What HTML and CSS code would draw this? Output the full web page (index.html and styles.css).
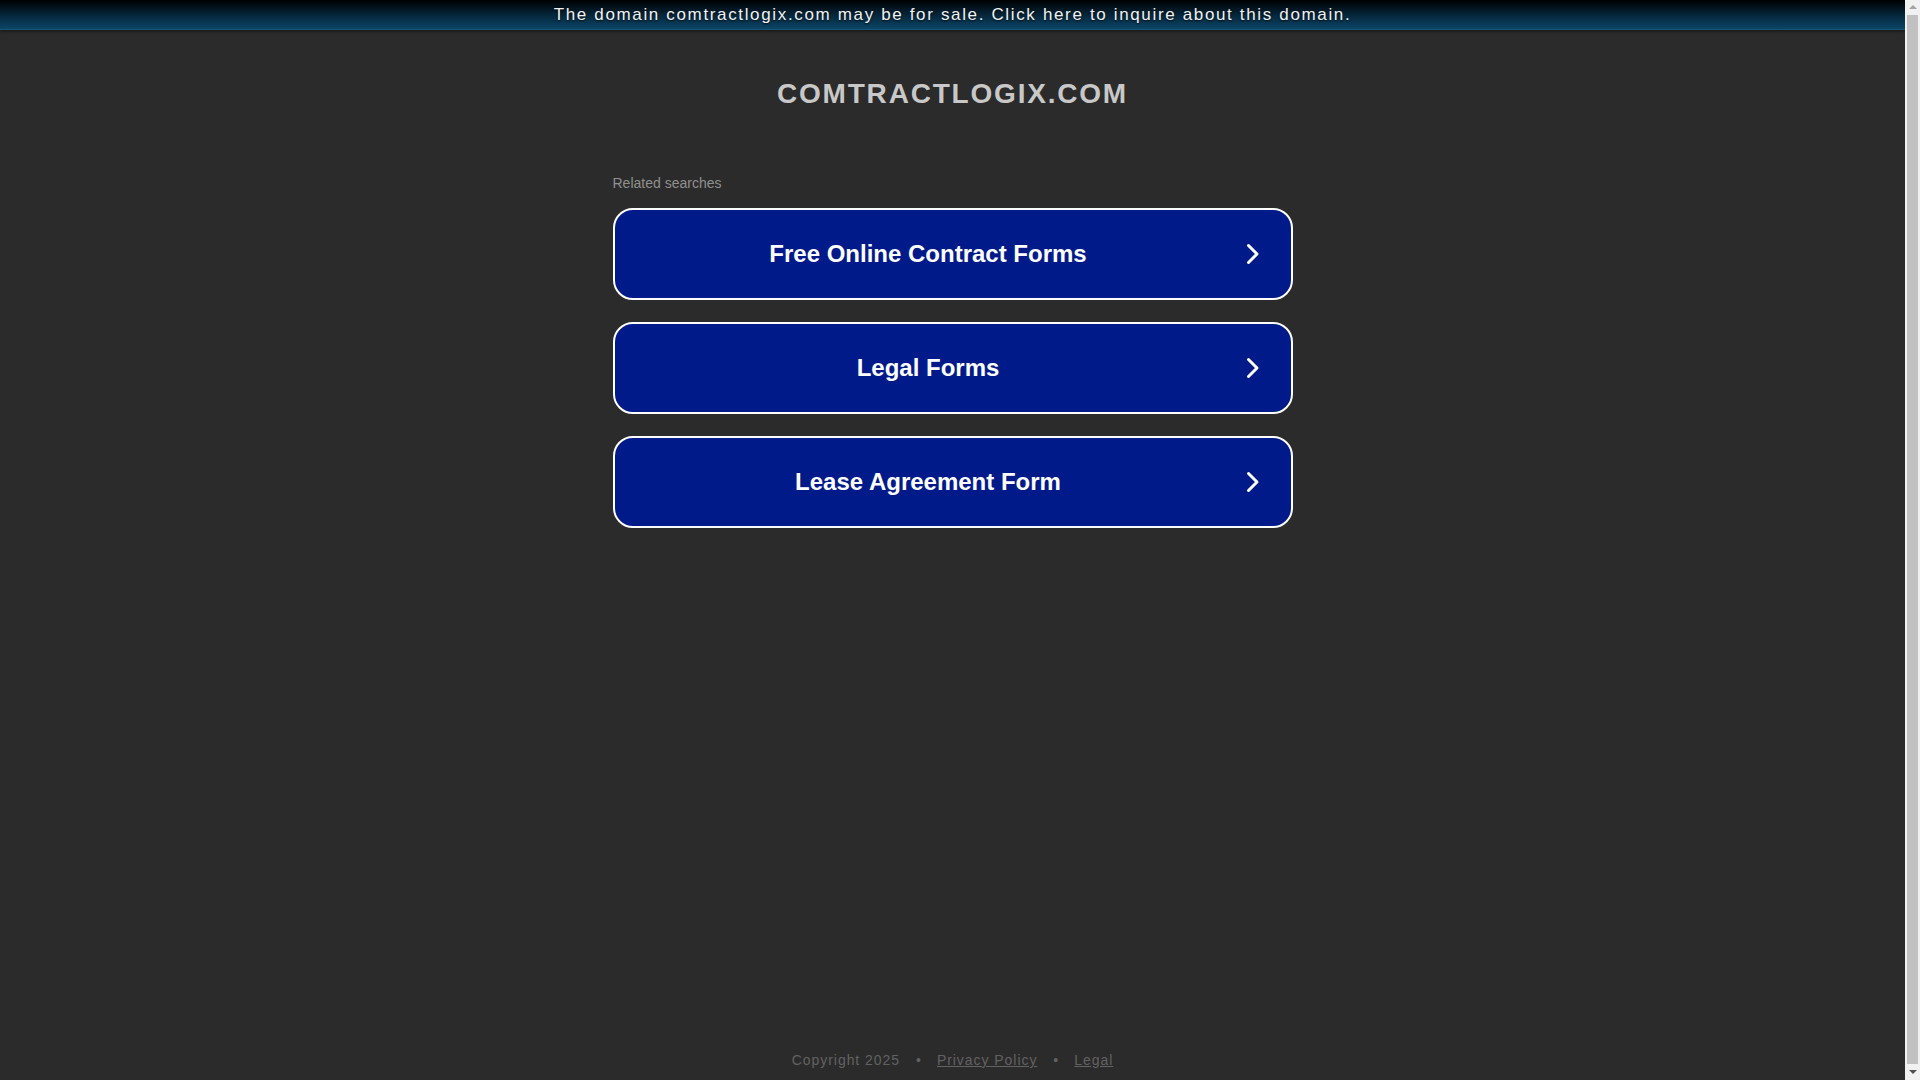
FILE: index.html
```html
<!DOCTYPE html>
<html lang="en">
<head>
<meta charset="utf-8">
<title>comtractlogix.com</title>
<link rel="stylesheet" href="styles.css">
</head>
<body>
<div class="page">
  <a class="sale-bar" href="#">The domain comtractlogix.com may be for sale. Click here to inquire about this domain.</a>
  <main class="content">
    <h1 class="domain">COMTRACTLOGIX.COM</h1>
    <div class="related">
      <p class="related-title">Related searches</p>
      <div class="cards">
        <a class="card" href="#"><span class="card-text">Free Online Contract Forms</span><svg class="chev" viewBox="0 0 14 22" width="14" height="22"><polyline points="2.5,2.5 11,11 2.5,19.5"/></svg></a>
        <a class="card" href="#"><span class="card-text">Legal Forms</span><svg class="chev" viewBox="0 0 14 22" width="14" height="22"><polyline points="2.5,2.5 11,11 2.5,19.5"/></svg></a>
        <a class="card" href="#"><span class="card-text">Lease Agreement Form</span><svg class="chev" viewBox="0 0 14 22" width="14" height="22"><polyline points="2.5,2.5 11,11 2.5,19.5"/></svg></a>
      </div>
    </div>
  </main>
  <footer class="footer">
    <span class="copy">Copyright 2025</span>
    <span class="dot">•</span>
    <a href="#" class="flink">Privacy Policy</a>
    <span class="dot">•</span>
    <a href="#" class="flink">Legal</a>
  </footer>
</div>
<div class="scrollbar" aria-hidden="true">
  <span class="sb-arrow sb-up"></span>
  <span class="sb-thumb"></span>
  <span class="sb-arrow sb-down"></span>
</div>
</body>
</html>
```

FILE: styles.css
```css
html, body {
  overflow: hidden;
}
body {
  margin: 0;
  background: #2b2b2b;
  font-family: "Liberation Sans", Arial, sans-serif;
}
.page {
  min-height: 100vh;
  margin-right: 15px;
  display: flex;
  flex-direction: column;
}
.sale-bar {
  display: block;
  height: 29px;
  line-height: 29px;
  text-align: center;
  color: #f2f2f2;
  font-size: 17px;
  letter-spacing: 1.65px;
  text-decoration: none;
  background: linear-gradient(to bottom, #000 0%, #05283e 55%, #0b4566 100%);
  border-bottom: 1px solid #1a5477;
  box-shadow: 0 1px 3px rgba(0, 0, 0, 0.6);
  text-shadow: 0 1px 2px rgba(0, 0, 0, 0.8);
}
.content {
  width: 680px;
  margin: 0 auto;
  flex: 1;
}
.domain {
  margin: 47px 0 0;
  font-size: 28px;
  line-height: 34px;
  letter-spacing: 1.8px;
  font-weight: bold;
  color: #c8c8c8;
  text-align: center;
}
.related {
  margin-top: 64px;
}
.related-title {
  margin: 0 0 17px;
  font-size: 14px;
  line-height: 16px;
  color: #909090;
}
.cards {
  display: flex;
  flex-direction: column;
  gap: 22px;
}
.card {
  display: flex;
  align-items: center;
  height: 88px;
  border: 2px solid #fff;
  border-radius: 20px;
  background: #011a8a;
  color: #fff;
  text-decoration: none;
}
.card-text {
  flex: 1;
  text-align: center;
  font-size: 24px;
  font-weight: bold;
  padding-right: 4px;
}
.chev {
  margin-right: 31px;
  fill: none;
  stroke: #fff;
  stroke-width: 3;
  stroke-linecap: round;
  stroke-linejoin: round;
}
.footer {
  display: flex;
  justify-content: center;
  gap: 16px;
  font-size: 14px;
  letter-spacing: 0.95px;
  color: #626262;
  padding: 0 0 10px;
  line-height: 20px;
}
.flink {
  color: #626262;
  text-decoration: underline;
}
.dot {
  letter-spacing: 0;
}
.scrollbar {
  position: fixed;
  top: 0;
  right: 0;
  width: 15px;
  height: 100vh;
  background: #f1f1f1;
  display: flex;
  flex-direction: column;
  align-items: center;
}
.sb-arrow {
  width: 0;
  height: 0;
  border-left: 4px solid transparent;
  border-right: 4px solid transparent;
}
.sb-up {
  margin-top: 5px;
  border-bottom: 4px solid #a3a3a3;
}
.sb-thumb {
  width: 11px;
  margin: 6px 0;
  flex: 1;
  background: #c1c1c1;
}
.sb-down {
  margin-bottom: 6px;
  border-top: 4px solid #505050;
}
```
